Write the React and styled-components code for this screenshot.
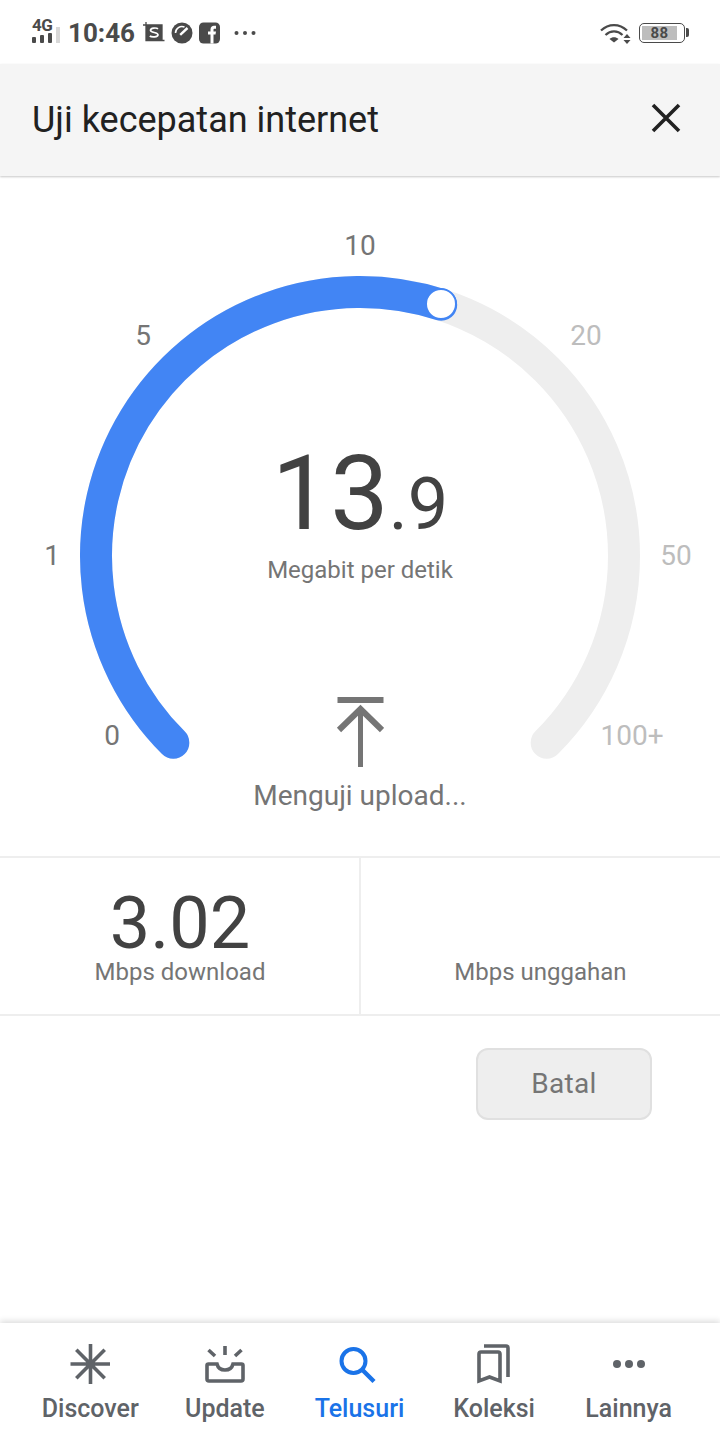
import React from "react";
import styled, { createGlobalStyle } from "styled-components";

const Global = createGlobalStyle`
  html, body { margin: 0; padding: 0; background: #fff; }
  * { box-sizing: border-box; }
  body { font-family: Roboto, "Liberation Sans", sans-serif; }
`;

const Page = styled.div`
  width: 720px;
  height: 1436px;
  display: flex;
  flex-direction: column;
  overflow: hidden;
  background: #fff;
`;

const StatusBar = styled.div`
  height: 64px;
  flex: none;
  display: flex;
  align-items: center;
  justify-content: space-between;
  padding: 2px 32px 0;
  color: #4a4a4a;
`;
const StatusGroup = styled.div`
  display: flex;
  align-items: center;
  gap: ${p => p.$gap || 8}px;
`;
const SignalBox = styled.div`
  position: relative;
  width: 28px;
  height: 28px;
`;
const SignalLabel = styled.span`
  position: absolute;
  left: 0;
  top: -4px;
  font-size: 17px;
  line-height: 20px;
  font-weight: 700;
  letter-spacing: -0.5px;
`;
const Clock = styled.span`
  font-size: 26px;
  font-weight: 700;
  line-height: 30px;
  margin: 0 2px;
`;
const Battery = styled.div`
  position: relative;
  width: 46px;
  height: 20px;
  border: 1.5px solid #4a4a4a;
  border-radius: 5px;
  padding: 2px;
  margin-right: 3px;
  &::after {
    content: "";
    position: absolute;
    right: -5px;
    top: 4px;
    width: 3px;
    height: 9px;
    background: #4a4a4a;
    border-radius: 0 2px 2px 0;
  }
`;
const BatteryFill = styled.div`
  height: 100%;
  width: 88%;
  background: #bdbdbd;
  display: flex;
  align-items: center;
  justify-content: center;
  font-size: 15px;
  font-weight: 700;
  letter-spacing: 0.5px;
  color: #4a4a4a;
`;

const Header = styled.header`
  height: 112px;
  flex: none;
  background: #f5f5f5;
  display: flex;
  align-items: center;
  justify-content: space-between;
  padding: 0 39px 4px 32px;
  box-shadow: 0 1px 2px rgba(0, 0, 0, 0.22);
  position: relative;
`;
const Title = styled.h1`
  margin: 4px 0 0;
  font-size: 36px;
  font-weight: 400;
  color: #212121;
`;

const Gauge = styled.section`
  position: relative;
  height: 680px;
  flex: none;
  display: flex;
  flex-direction: column;
  align-items: center;
`;
const GaugeArt = styled.svg`
  position: absolute;
  left: 0;
  top: 0;
`;
const Tick = styled.span`
  position: absolute;
  left: ${p => p.$x}px;
  top: ${p => p.$y}px;
  transform: translate(-50%, -50%);
  font-size: 28px;
  line-height: 32px;
  color: ${p => (p.$done ? "#757575" : "#bdbdbd")};
`;
const Speed = styled.div`
  position: relative;
  margin-top: 260px;
  height: 116px;
  display: flex;
  align-items: baseline;
  justify-content: center;
  color: #424242;
  font-weight: 400;
  line-height: 116px;
`;
const SpeedInt = styled.span`
  font-size: 104px;
`;
const SpeedDec = styled.span`
  font-size: 72px;
`;
const Unit = styled.div`
  position: relative;
  margin-top: 3px;
  font-size: 24px;
  line-height: 30px;
  color: #757575;
`;
const Arrow = styled.svg`
  position: relative;
  margin-top: 112px;
  display: block;
`;
const Testing = styled.div`
  position: relative;
  margin-top: 11px;
  font-size: 28px;
  line-height: 36px;
  color: #757575;
`;

const Stats = styled.section`
  height: 160px;
  flex: none;
  display: grid;
  grid-template-columns: 1fr 1fr;
  border-top: 2px solid #eeeeee;
  border-bottom: 2px solid #eeeeee;
`;
const Stat = styled.div`
  display: flex;
  flex-direction: column;
  align-items: center;
  justify-content: flex-start;
  padding-top: 33px;
  margin-left: ${p => (p.$second ? -1 : 0)}px;
  & + & {
    border-left: 2px solid #eeeeee;
  }
`;
const StatValue = styled.div`
  font-size: 72px;
  font-weight: 400;
  line-height: 66px;
  height: 66px;
  color: #424242;
`;
const StatLabel = styled.div`
  font-size: 24px;
  line-height: 30px;
  color: #757575;
`;

const Actions = styled.div`
  flex: none;
  display: flex;
  justify-content: flex-end;
  padding: 32px 68px 0 0;
`;
const CancelButton = styled.button`
  width: 176px;
  height: 72px;
  background: #eeeeee;
  border: 2px solid #e0e0e0;
  border-radius: 12px;
  font-family: inherit;
  font-size: 28px;
  line-height: 30px;
  letter-spacing: 0.3px;
  color: #757575;
  padding: 0 0 1px;
`;
const Spacer = styled.div`
  flex: 1;
`;

const Nav = styled.nav`
  height: 113px;
  flex: none;
  display: grid;
  grid-template-columns: repeat(5, 1fr);
  padding: 0 24px 0 23px;
  background: #fff;
  box-shadow: 0 -2px 6px rgba(0, 0, 0, 0.14);
  position: relative;
`;
const NavItem = styled.div`
  display: flex;
  flex-direction: column;
  align-items: center;
  padding-top: 21px;
  color: ${p => (p.$active ? "#1a73e8" : "#5f6368")};
`;
const NavLabel = styled.span`
  font-size: 25px;
  font-weight: 500;
  line-height: 30px;
  margin-top: 10px;
  white-space: nowrap;
`;

const CX = 360;
const CY = 380;
const R = 264;
const pt = deg => {
  const a = (deg * Math.PI) / 180;
  return [CX + R * Math.sin(a), CY - R * Math.cos(a)];
};
const arc = (a, b) => {
  const [x1, y1] = pt(a);
  const [x2, y2] = pt(b);
  return `M${x1} ${y1}A${R} ${R} 0 ${b - a > 180 ? 1 : 0} 1 ${x2} ${y2}`;
};

const ticks = [
  { t: "0", x: 112, y: 560, done: true },
  { t: "1", x: 52, y: 380, done: true },
  { t: "5", x: 143, y: 160, done: true },
  { t: "10", x: 360, y: 70, done: true },
  { t: "20", x: 586, y: 160 },
  { t: "50", x: 676, y: 380 },
  { t: "100+", x: 632, y: 560 },
];

const Svg = ({ size = 40, children, ...rest }) => (
  <svg width={size} height={size} viewBox="0 0 40 40" fill="none" {...rest}>
    {children}
  </svg>
);

export default function App() {
  return (
    <Page>
      <Global />
      <StatusBar>
        <StatusGroup $gap={6}>
          <SignalBox>
            <SignalLabel>4G</SignalLabel>
            <svg width="28" height="28" viewBox="0 0 28 28" style={{ display: "block" }}>
              <rect x="0" y="18" width="4" height="6" fill="#4a4a4a" rx="1" />
              <rect x="8" y="16" width="4" height="8" fill="#4a4a4a" rx="1" />
              <rect x="16" y="14" width="4" height="10" fill="#4a4a4a" rx="1" />
              <rect x="24" y="8" width="4" height="16" fill="#d8d8d8" />
            </svg>
          </SignalBox>
          <Clock>10:46</Clock>
          <svg width="22" height="22" viewBox="0 0 22 22" fill="none">
            <path d="M0 3H19V18" stroke="#4a4a4a" strokeWidth="1.3" />
            <path d="M3 0V18.500H21.500" stroke="#4a4a4a" strokeWidth="1.3" />
            <rect x="3" y="3" width="16" height="15.500" fill="#4a4a4a" />
            <path d="M15 6.800C13.500 5.600 7.500 5.600 7.500 8.300C7.500 11 15 10 15 12.800C15 15.400 8.500 15.400 6.800 14" stroke="#fff" strokeWidth="1.700" />
          </svg>
          <svg width="22" height="22" viewBox="0 0 22 22" fill="none">
            <circle cx="11" cy="11" r="10.500" fill="#4a4a4a" />
            <path d="M4.500 11A6.500 6.500 0 0 1 13.500 5" stroke="#fff" strokeWidth="1.600" />
            <path d="M9.200 12.800L16.500 6" stroke="#fff" strokeWidth="2.400" />
          </svg>
          <svg width="22" height="22" viewBox="0 0 22 22">
            <rect width="21" height="21" y="0.5" rx="4.500" fill="#4a4a4a" />
            <path d="M11.500 21.500V12.500H9V9.500H11.500V7.500C11.500 5 13 3.800 15 3.800H17V6.800H15.600C14.700 6.800 14.500 7.200 14.500 8V9.500H17L16.500 12.500H14.500V21.500Z" fill="#fff" />
          </svg>
          <svg width="22" height="6" viewBox="0 0 22 6" style={{ marginLeft: 7 }}>
            <circle cx="2.500" cy="3" r="2" fill="#4a4a4a" />
            <circle cx="11" cy="3" r="2" fill="#4a4a4a" />
            <circle cx="19.500" cy="3" r="2" fill="#4a4a4a" />
          </svg>
        </StatusGroup>
        <StatusGroup $gap={7}>
          <svg width="32" height="22" viewBox="0 0 32 22" fill="none">
            <path d="M1 8.500C8.500 1.200 19.500 1.200 27 8.500" stroke="#4a4a4a" strokeWidth="2.200" />
            <path d="M5.500 13C10.500 8.200 17.500 8.200 22.500 13" stroke="#4a4a4a" strokeWidth="2.200" />
            <path d="M9.500 17C12 14.700 16 14.700 18.500 17L14 20.500Z" fill="#4a4a4a" />
            <path d="M27 12L30.500 16H23.500Z" fill="#4a4a4a" />
            <path d="M27 22L30.500 18H23.500Z" fill="#4a4a4a" />
          </svg>
          <Battery>
            <BatteryFill>88</BatteryFill>
          </Battery>
        </StatusGroup>
      </StatusBar>

      <Header>
        <Title>Uji kecepatan internet</Title>
        <svg width="30" height="30" viewBox="0 0 30 30" fill="none">
          <path d="M2 2L28 28M28 2L2 28" stroke="#212121" strokeWidth="3.600" />
        </svg>
      </Header>

      <Gauge>
        <GaugeArt width="720" height="680" viewBox="0 0 720 680" fill="none">
          <path d={arc(-135, 135)} stroke="#eeeeee" strokeWidth="32" strokeLinecap="round" />
          <path d={arc(-135, 17.9)} stroke="#4285f4" strokeWidth="32" strokeLinecap="round" />
          <circle cx="441" cy="128" r="15" fill="#fff" stroke="#4285f4" strokeWidth="2" />
        </GaugeArt>
        {ticks.map(k => (
          <Tick key={k.t} $x={k.x} $y={k.y} $done={k.done}>
            {k.t}
          </Tick>
        ))}
        <Speed>
          <SpeedInt>13</SpeedInt>
          <SpeedDec>.9</SpeedDec>
        </Speed>
        <Unit>Megabit per detik</Unit>
        <Arrow width="48" height="70" viewBox="0 0 48 70" fill="none">
          <path d="M1.500 3H47.500" stroke="#757575" strokeWidth="6" />
          <path d="M24.500 70V12" stroke="#757575" strokeWidth="5" />
          <path d="M3 33L24.500 12L46 33" stroke="#757575" strokeWidth="6" />
        </Arrow>
        <Testing>Menguji upload...</Testing>
      </Gauge>

      <Stats>
        <Stat>
          <StatValue>3.02</StatValue>
          <StatLabel>Mbps download</StatLabel>
        </Stat>
        <Stat $second>
          <StatValue />
          <StatLabel>Mbps unggahan</StatLabel>
        </Stat>
      </Stats>

      <Actions>
        <CancelButton>Batal</CancelButton>
      </Actions>
      <Spacer />

      <Nav>
        <NavItem>
          <Svg size={40}>
            <path d="M20.500 0V40M0.500 20H40.500M6.300 5.800L34.700 34.200M34.700 5.800L6.300 34.200" stroke="#5f6368" strokeWidth="3.600" />
          </Svg>
          <NavLabel>Discover</NavLabel>
        </NavItem>
        <NavItem>
          <Svg size={40}>
            <path d="M20 2V11M3.500 6L10 12M36.500 6L30 12" stroke="#5f6368" strokeWidth="3.600" />
            <path d="M12 20H3.500A1.500 1.500 0 0 0 2 21.500V35A2 2 0 0 0 4 37H36A2 2 0 0 0 38 35V21.500A1.500 1.500 0 0 0 36.500 20H28C27 24 24 26 20 26C16 26 13 24 12 20Z" stroke="#5f6368" strokeWidth="3.600" />
          </Svg>
          <NavLabel>Update</NavLabel>
        </NavItem>
        <NavItem $active>
          <Svg size={40}>
            <circle cx="14.500" cy="17" r="12" stroke="#1a73e8" strokeWidth="4" />
            <path d="M22.500 25L35 37.500" stroke="#1a73e8" strokeWidth="4.400" />
          </Svg>
          <NavLabel>Telusuri</NavLabel>
        </NavItem>
        <NavItem>
          <Svg size={40}>
            <path d="M10 2H32A2 2 0 0 1 34 4V33" stroke="#5f6368" strokeWidth="3.600" />
            <path d="M5 10A2 2 0 0 1 7 8H24A2 2 0 0 1 26 10V37L15.500 33L5 37Z" stroke="#5f6368" strokeWidth="3.600" />
          </Svg>
          <NavLabel>Koleksi</NavLabel>
        </NavItem>
        <NavItem>
          <Svg size={40}>
            <circle cx="8" cy="20" r="4" fill="#5f6368" />
            <circle cx="20" cy="20" r="4" fill="#5f6368" />
            <circle cx="32" cy="20" r="4" fill="#5f6368" />
          </Svg>
          <NavLabel>Lainnya</NavLabel>
        </NavItem>
      </Nav>
    </Page>
  );
}
